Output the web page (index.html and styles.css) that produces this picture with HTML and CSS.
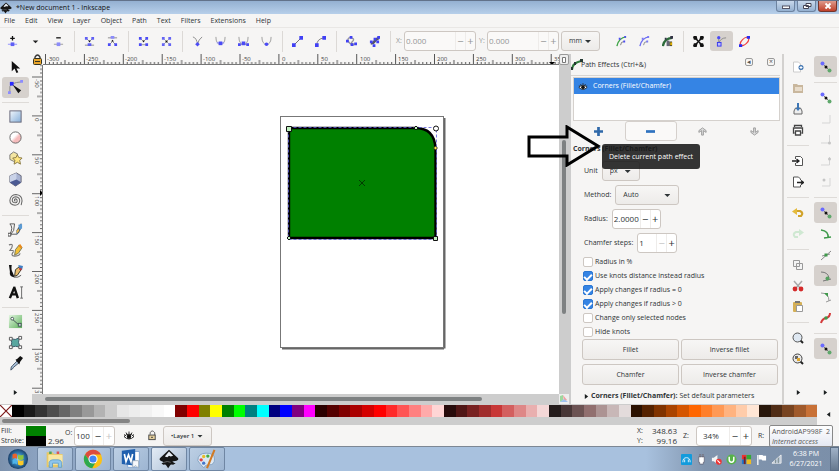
FILE: index.html
```html
<!DOCTYPE html>
<html lang="en">
<head>
<meta charset="utf-8">
<title>*New document 1 - Inkscape</title>
<link rel="stylesheet" href="styles.css">
</head>
<body>
<svg class="defs" aria-hidden="true">
  <defs>
    <linearGradient id="gBlue" x1="0" y1="0" x2="1" y2="1"><stop offset="0" stop-color="#f2f7fc"/><stop offset="1" stop-color="#86afd9"/></linearGradient>
    <linearGradient id="gPink" x1="0" y1="0" x2="1" y2="1"><stop offset=".4" stop-color="#fff"/><stop offset=".6" stop-color="#f6bcbc"/></linearGradient>
    <linearGradient id="gGreen" x1="0" y1="0" x2="1" y2="1"><stop offset="0" stop-color="#e2f5e0"/><stop offset="1" stop-color="#5fb25c"/></linearGradient>
    <radialGradient id="gOrb"><stop offset="0" stop-color="#9bd4f0"/><stop offset=".6" stop-color="#2f78ad"/><stop offset="1" stop-color="#1b3f68"/></radialGradient>
    <symbol id="ink" viewBox="0 0 24 24"><path d="M12 1 23 11q1 2-2 3l-5 1q2 2 4 2l-3 2q-3-1-4 1l-2 3-2-3q-1-2-4-1l-2-2 3-1-4-2q-2-1-1-3z" fill="#161616"/><path d="m12 3 5 5-3 1-2-1-2 2-3-1z" fill="#e8eef5"/><path d="M6 16q4-2 8 0" stroke="#777" fill="none"/></symbol>
    <symbol id="nodeSnap" viewBox="0 0 12 12"><path d="M2 2 10 10" stroke="#777"/><circle cx="2.500" cy="2.500" r="2" fill="#6a6aff"/><circle cx="6" cy="6" r="1.500" fill="#111"/><circle cx="9.500" cy="9.500" r="2" fill="#5fa86c"/></symbol>
    <symbol id="eye" viewBox="0 0 12 10"><path d="M1 6Q6 1 11 6 6 11 1 6z" fill="#fff" stroke="#222"/><circle cx="6" cy="6" r="2.200" fill="#111"/><path d="M1 4 2.500 5M3 2l1 2M6 1v2M9 2 8 4M11 4 9.500 5" stroke="#222" stroke-width=".9"/></symbol>
    <symbol id="tri" viewBox="0 0 6 8"><path d="M1 1v6l4-3z" fill="#1b1f20"/></symbol>
    <pattern id="ticksH" x="43.500" width="38.900" height="12" patternUnits="userSpaceOnUse"><path d="M4.390 8v4M8.280 8v4M12.170 8v4M16.060 8v4M19.950 6v6M23.840 8v4M27.730 8v4M31.620 8v4M35.510 8v4" stroke="#555"/><path d="M.5 0v12" stroke="#555"/></pattern>
    <pattern id="ticksV" y="11.500" width="11" height="38.900" patternUnits="userSpaceOnUse"><path d="M8 4.390h3M8 8.280h3M8 12.170h3M8 16.060h3M5 19.950h6M8 23.840h3M8 27.730h3M8 31.620h3M8 35.510h3" stroke="#666"/><path d="M0 .5h11" stroke="#666"/></pattern>
  </defs>
</svg>

<div class="app">
  <header class="titlebar">
    <svg class="i12"><use href="#ink"/></svg>
    <h1>*New document 1 - Inkscape</h1>
    <div class="winbtns">
      <button aria-label="Minimize"><svg viewBox="0 0 12 8"><rect x="2.500" y="4" width="7" height="2.500" fill="#fff" stroke="#556"/></svg></button>
      <button aria-label="Restore"><svg viewBox="0 0 12 8"><path d="M5 1.500h5v3H5zM2.500 3.500h5v3h-5z" fill="#fff" stroke="#445"/></svg></button>
      <button class="close" aria-label="Close"><svg viewBox="0 0 12 8"><path d="m3.500 1.500 5 5m0-5-5 5" stroke="#fff" stroke-width="1.800"/></svg></button>
    </div>
  </header>

  <nav class="menubar">
    <button>File</button><button>Edit</button><button>View</button><button>Layer</button><button>Object</button><button>Path</button><button>Text</button><button>Filters</button><button>Extensions</button><button>Help</button>
  </nav>

  <div class="toolbar">
    <button class="tb" aria-label="Insert node"><svg viewBox="0 0 12 12"><path d="M1 9h10" stroke="#8a8aff"/><rect x="4" y="7" width="4" height="4" fill="#5f5ff5"/><path d="M6 0v5M3.500 2.500h5" stroke="#111" stroke-width="1.400"/></svg></button>
    <button class="tb" aria-label="Insert options"><svg viewBox="0 0 12 12"><path d="M3 5h6L6 8z" fill="#222"/></svg></button>
    <button class="tb" aria-label="Delete node"><svg viewBox="0 0 12 12"><path d="M1 9h10" stroke="#999"/><rect x="4" y="7" width="4" height="4" fill="#8c8cfa"/><path d="M3.500 2h5" stroke="#111" stroke-width="1.400"/></svg></button>
    <i class="vsep"></i>
    <button class="tb" aria-label="Join nodes"><svg viewBox="0 0 12 12"><path d="M1 10h10M3 3l2 2m4-2L7 5" stroke="#888"/><path d="M1 1h3v3H1zM8 1h3v3H8zM4 8h4v3H4z" fill="#5f5ff5"/><path d="M4.500 5h3L6 7z" fill="#111"/></svg></button>
    <button class="tb" aria-label="Break path"><svg viewBox="0 0 12 12"><path d="M1 2h10M3 9l3-3 3 3" stroke="#888" fill="none"/><path d="M4 0h4v3H4z" fill="#8c8cfa"/><path d="M1 8h3v3H1zM8 8h3v3H8z" fill="#4b4bf5"/><path d="M4.500 6h3L6 4z" fill="#111"/></svg></button>
    <i class="vsep"></i>
    <button class="tb" aria-label="Join with segment"><svg viewBox="0 0 12 12"><path d="M3 9.500h6M2 2l3 3m5-3L7 5" stroke="#999"/><path d="M1 1h3v3H1zM8 1h3v3H8zM1 8h3v3H1zM8 8h3v3H8z" fill="#4b4bf5"/><path d="M4.500 5h3L6 7z" fill="#111"/></svg></button>
    <button class="tb" aria-label="Delete segment"><svg viewBox="0 0 12 12"><path d="m3 3 6 6m0-6L3 9" stroke="#aaa"/><path d="M1 1h3v3H1zM8 1h3v3H8zM1 8h3v3H1zM8 8h3v3H8z" fill="#6464f5"/><path d="M5 5h2v2H5z" fill="#111"/></svg></button>
    <i class="vsep"></i>
    <button class="tb" aria-label="Corner"><svg viewBox="0 0 12 12"><path d="M1 1q4 1 5 8 1-5 5-8" fill="none" stroke="#888"/><path d="m6 6.500 2.500 2.500L6 11.500 3.500 9z" fill="#4b4bf5"/></svg></button>
    <button class="tb" aria-label="Smooth"><svg viewBox="0 0 12 12"><path d="M1 1q0 8 5 8t5-8" fill="none" stroke="#999"/><path d="M2 7.500h8" stroke="#88f"/><rect x="4" y="6" width="4" height="4" fill="#4b4bf5"/></svg></button>
    <button class="tb" aria-label="Symmetric"><svg viewBox="0 0 12 12"><path d="M1 1q0 8 5 8t5-8M1 9h10" fill="none" stroke="#999"/><path d="M4 6h4v4H4zM0 8h3v3H0zM9 8h3v3H9z" fill="#4b4bf5"/></svg></button>
    <button class="tb" aria-label="Auto smooth"><svg viewBox="0 0 12 12"><path d="M1 1q0 8 5 8t5-8" fill="none" stroke="#999"/><circle cx="6" cy="9" r="2" fill="#4b4bf5"/></svg></button>
    <i class="vsep"></i>
    <button class="tb" aria-label="Make line"><svg viewBox="0 0 12 12"><path d="m2 10 8-8" stroke="#666"/><path d="M0 8h4v4H0zM8 0h4v4H8z" fill="#4040f5"/></svg></button>
    <button class="tb" aria-label="Make curve"><svg viewBox="0 0 12 12"><path d="M2 10q0-7 8-8" fill="none" stroke="#777"/><path d="M0 8h4v4H0zM8 0h4v4H8z" fill="#4040f5"/></svg></button>
    <i class="vsep"></i>
    <button class="tb" aria-label="Object to path"><svg viewBox="0 0 12 12"><path d="M2 5q0-4 4-3t1 4 4 3M2 5q2 4 7 5" fill="none" stroke="#999" stroke-width="1.500"/><path d="M4 0h3v3H4zM0 4h3v3H0zM5 8h3v3H5zM9 7h3v3H9z" fill="#4040f5"/></svg></button>
    <button class="tb" aria-label="Stroke to path"><svg viewBox="0 0 12 12"><path d="M2 8q3 0 4-2t5-4" fill="none" stroke="#556" stroke-width="3"/><path d="M1 5h3v3H1zM4 9h3v3H4zM5 2h3v3H5zM9 0h3v3H9zM8 5h3v3H8z" fill="#4040f5"/></svg></button>
    <i class="vsep"></i>
    <label class="dim axis" for="nx">X:</label>
    <div class="spin wide dim"><input id="nx" value="0.000"><button aria-label="Less">−</button><button aria-label="More">+</button></div>
    <label class="dim axis" for="ny">Y:</label>
    <div class="spin wide dim"><input id="ny" value="0.000"><button aria-label="Less">−</button><button aria-label="More">+</button></div>
    <div class="sel unit"><select aria-label="Units"><option>mm</option></select></div>
    <button class="tb after" aria-label="Edit clip"><svg viewBox="0 0 12 12"><path d="M1 11q2-9 10-10" fill="none" stroke="#3fa447" stroke-width="1.500"/><path d="M5 10q0-4 4-4" fill="none" stroke="#777"/><path d="M3 2h2v2H3zM9 0h2v2H9zM8 5h2v2H8z" fill="#4b4bf5"/></svg></button>
    <button class="tb" aria-label="Edit mask"><svg viewBox="0 0 12 12"><path d="M1 11q2-9 10-10" fill="none" stroke="#6d6df0" stroke-width="1.500"/><path d="M5 10q0-4 4-4" fill="none" stroke="#888"/><path d="M3 2h2v2H3zM9 0h2v2H9zM8 5h2v2H8z" fill="#7777f5"/></svg></button>
    <button class="tb" aria-label="Edit effect"><svg viewBox="0 0 12 12"><path d="M1 11q1-8 10-9" fill="none" stroke="#2c6b3a" stroke-width="2.400"/><path d="M5 5h3v6H5z" fill="#667"/><path d="M8 6h3v5H8z" fill="#443"/><path d="M9 7h2v3H9z" fill="#e5b300"/><path d="M3 2h2v2H3zM9 0h3v3H9z" fill="#334"/></svg></button>
    <i class="vsep"></i>
    <button class="tb" aria-label="Transform handles"><svg viewBox="0 0 12 12"><path d="m2 2 8 8m0-8-8 8" stroke="#111" stroke-width="1.500"/><path d="M1 0h3l1 4-4 0-1-3zM11 0H8L7 4h4l1-3zM1 12h3l1-4H1l-1 3zM11 12H8L7 8h4l1 3z" fill="#111"/></svg></button>
    <button class="tb on" aria-label="Bezier handles"><svg viewBox="0 0 12 12"><path d="M3 8V2M3 8q2-6 8-6" fill="none" stroke="#888"/><circle cx="3" cy="1.800" r="1.800" fill="#4b4bf5"/><rect x="1.500" y="7" width="4" height="4" fill="#bbf" stroke="#3333f0"/></svg></button>
    <button class="tb" aria-label="Path outline"><svg viewBox="0 0 12 12"><ellipse cx="6" cy="6" rx="5.500" ry="3" transform="rotate(-45 6 6)" fill="none" stroke="#f04040" stroke-width="1.300"/><path d="M0 9h3.500v3H0zM8.500 0H12v3H8.500z" fill="#2b2bf0"/></svg></button>
  </div>

  <main class="work">
    <aside class="toolbox">
      <button aria-label="Selector"><svg viewBox="0 0 16 16"><path d="M4 2v11l3-3 2 5 2-1-2-4h4z" fill="#111"/></svg></button>
      <button class="on" aria-label="Node"><svg viewBox="0 0 16 16"><path d="M2 13V7q1-4 12-5" fill="none" stroke="#888"/><path d="M0 12h3v3H0zM13 0h3v3h-3z" fill="#8c8cff"/><path d="M2 2h4v4H2z" fill="#2a2aff"/><path d="m5 5 9 6-3 3z" fill="#111"/></svg></button>
      <hr>
      <button aria-label="Rectangle"><svg viewBox="0 0 16 16"><rect x="2" y="2" width="12" height="12" fill="url(#gBlue)" stroke="#667"/></svg></button>
      <button aria-label="Ellipse"><svg viewBox="0 0 16 16"><circle cx="8" cy="8" r="6" fill="url(#gPink)" stroke="#666"/></svg></button>
      <button aria-label="Star"><svg viewBox="0 0 16 16"><path d="M2 4 6 1l4 2v5l-4 3-4-2z" fill="#f3e5a2" stroke="#777"/><path d="m10 4 1.500 3 3.500.5-2.500 2.500.8 4-3.300-2-3.500 2 .8-4L5 7.500 8.500 7z" fill="#ffe680" stroke="#887744"/></svg></button>
      <button aria-label="3D box"><svg viewBox="0 0 16 16"><path d="M2 4 9 1l5 3v7l-6 4-6-4z" fill="#a8b3d3" stroke="#667"/><path d="M2 4 9 1v7l-7 3z" fill="#c9d2e8"/><path d="m2 11 7-3 5 3-6 4z" fill="#4b5a93"/></svg></button>
      <button aria-label="Spiral"><svg viewBox="0 0 16 16"><path d="M8 8.500q-1.500 0-1-1.500 1-1.500 2.500 0 1 3-1.500 3.500-3.500 0-3.500-3Q5 4 8.500 4q4 .5 4 4.500-.8 4.500-5 4.500Q2 12.500 2 8q.5-6 6.500-6.500Q15 2 15 8.500L14 13" fill="none" stroke="#666" stroke-width="1.100"/></svg></button>
      <hr>
      <button aria-label="Pen"><svg viewBox="0 0 16 16"><path d="M2 2h5l-1 7-3 4M2 2q4 4 0 11h7" fill="none" stroke="#555"/><path d="M14 1 9 9v5l3-3 3-6z" fill="#465b72"/><path d="m11 3 4-1v5l-3 1z" fill="#5b9bd5"/><path d="M0 12h3v3H0z" fill="#fff" stroke="#444"/><path d="m9 10 2-3 1 2-2 3z" fill="#f0bb4a"/></svg></button>
      <button aria-label="Pencil"><svg viewBox="0 0 16 16"><path d="M1 2q5-2 3 3L2 8h4M6 9q-4 5 1 5t6-3" fill="none" stroke="#777" stroke-width="1.200"/><path d="m7 13 1-6 4-5 3 3-4 6z" fill="#f2c037" stroke="#775"/><path d="m11 3 2-2 2 3-1 2z" fill="#e98a1c"/></svg></button>
      <button aria-label="Calligraphy"><svg viewBox="0 0 16 16"><path d="M1 1h3q-1 5 1 8l2 5q-6 0-5-6z" fill="#111"/><path d="M6 14q5 1 8-2" stroke="#555" fill="none"/><path d="m7 13 1-7 4-3 2 3-4 6z" fill="#e9bd6d" stroke="#332"/><path d="m11 1 5 1-1 4-3-1z" fill="#3f7fc4"/><path d="m12 4 3 1-1 2-2-1z" fill="#c33"/></svg></button>
      <button aria-label="Text"><svg viewBox="0 0 16 16"><path d="M7 2 2 14M6.500 2l4 12M4 10h5" stroke="#111" stroke-width="2.600" fill="none"/><path d="M13 2h3m-1.500 0v12M13 14h3" stroke="#666" fill="none"/></svg></button>
      <hr>
      <button aria-label="Gradient"><svg viewBox="0 0 16 16"><rect x="1" y="1" width="14" height="14" fill="url(#gGreen)"/><path d="m4 5 8 7" stroke="#455"/><circle cx="4.500" cy="5" r="1.500" fill="#fff" stroke="#455"/><rect x="11" y="10" width="3" height="3" fill="#cdd" stroke="#455"/></svg></button>
      <button aria-label="Mesh"><svg viewBox="0 0 16 16"><path d="M3 4q5 2 9-1-2 5 1 10-5-2-10 0 2-5 0-9z" fill="#58a79f" stroke="#356"/><path d="M1.500 2.500h3v3h-3zM11.500 1.500h3v3h-3zM1.500 11.500h3v3h-3zM11.500 11.500h3v3h-3z" fill="#fff" stroke="#555"/></svg></button>
      <button aria-label="Dropper"><svg viewBox="0 0 16 16"><path d="M3 15q0-4 2-5l5-5 2 2-6 5q-1 2-3 3z" fill="#a9bfd8" stroke="#456"/><path d="m8 4 2-1 3-3 3 2-3 4-1 3z" fill="#111"/></svg></button>
      <button class="more" aria-label="More tools"><svg class="tri"><use href="#tri"/></svg></button>
    </aside>

    <section class="view">
      <div class="corner"><svg viewBox="0 0 11 11"><path d="M3 5V3q2.500-4 5 0v2" fill="none" stroke="#333" stroke-width="1.400"/><rect x="1.500" y="4.500" width="8" height="6" rx="1" fill="#e9a52b" stroke="#332"/><path d="M3 7.500h5" stroke="#332"/></svg></div>
      <svg class="rulerh">
        <g transform="translate(-41.500 0)"><rect x="43" width="2000" height="12" fill="url(#ticksH)"/></g>
        <g class="rtext"><text x="4" y="7">-300</text><text x="43" y="7">-250</text><text x="82" y="7">-200</text><text x="121" y="7">-150</text><text x="160" y="7">-100</text><text x="199" y="7">-50</text><text x="239" y="7">0</text><text x="278" y="7">50</text><text x="317" y="7">100</text><text x="355" y="7">150</text><text x="394" y="7">200</text><text x="433" y="7">250</text><text x="472" y="7">300</text><text x="511" y="7">350</text></g>
        <path d="M506 8h6l-3 3z"/>
      </svg>
      <button class="zoomfit" aria-label="Fit drawing"><svg viewBox="0 0 8 8"><path d="M2.500 1.500h3v5h-3z" fill="#fff" stroke="#777"/></svg></button>
      <svg class="rulerv">
        <rect width="11" height="2000" fill="url(#ticksV)"/>
        <g class="rtext"><text transform="translate(3 14) rotate(90)">-50</text><text transform="translate(3 53) rotate(90)">0</text><text transform="translate(3 92) rotate(90)">50</text><text transform="translate(3 131) rotate(90)">100</text><text transform="translate(3 170) rotate(90)">150</text><text transform="translate(3 209) rotate(90)">200</text><text transform="translate(3 248) rotate(90)">250</text><text transform="translate(3 287) rotate(90)">300</text><text transform="translate(3 325) rotate(90)">350</text></g>
        <path d="M8 125v6l3-3z"/>
      </svg>
      <svg class="canvas">
        <path d="M401.500 53v230.500M239 283.500h162" stroke="#666" stroke-width="2" fill="none"/>
        <rect x="237.500" y="51.500" width="163" height="231" fill="#fff" stroke="#777"/>
        <path d="M246 63h126q20 0 20.500 21v89H246z" fill="#008000" stroke="#000" stroke-width="2.400"/>
        <path d="M245.500 62.500h148v112h-148z" fill="none" stroke="#5a5ad8" stroke-dasharray="3 2" stroke-width=".8"/>
        <path d="m316 115 6 6m0-6-6 6" stroke="#022b02" stroke-width=".8"/>
        <g fill="#bff0bf" stroke="#111"><path d="M243.500 61.500h5v5h-5z"/><path d="m373 61 2 2-2 2-2-2zM246 171l2 2-2 2-2-2z"/><path d="M390.500 171.500h4v4h-4z"/></g>
        <circle cx="393" cy="63.500" r="2.500" fill="#fff" stroke="#111"/>
        <path d="m392.500 81 2 2-2 2-2-2z" fill="#ffe94a" stroke="#222" stroke-width=".8"/>
      </svg>
      <div class="vscroll"><i></i></div>
      <div class="hscroll"><i></i></div>
      <div class="cms"><svg viewBox="0 0 10 9"><path d="M1 8V2l3-1v5z" fill="#9fd89f"/><path d="m4 1 4 5-3 2z" fill="#f0a0a0"/><path d="m1 8 4-3 4 3z" fill="#9fc4f0"/></svg></div>
      <svg class="pointer" viewBox="0 0 74 42"><path d="M2 12h38V2l31 19-31 19v-9H2z" fill="none" stroke="#000" stroke-width="3"/></svg>
    </section>

    <section class="panel">
      <header><svg class="i12" viewBox="0 0 12 12"><path d="M1 11q0-7 9-9" fill="none" stroke="#2f7d3d" stroke-width="2"/><path d="M0 8h2v3H0zM3 3h2v3H3zM9 0h3v3H9z" fill="#253a33"/></svg><h2>Path Effects (Ctrl+&amp;)</h2>
        <button aria-label="Iconify">◂</button><button aria-label="Close dialog">×</button></header>
      <div class="list"><div class="row"><svg class="eye"><use href="#eye"/></svg>Corners (Fillet/Chamfer)</div></div>
      <div class="ops">
        <button aria-label="Add effect"><svg viewBox="0 0 8 8"><path d="M4 0v8M0 4h8" stroke="#2f68a8" stroke-width="2.400"/></svg></button>
        <button class="boxed" aria-label="Delete effect"><svg viewBox="0 0 8 8"><path d="M0 4h8" stroke="#2f73c0" stroke-width="2.400"/></svg></button>
        <button aria-label="Move up"><svg viewBox="0 0 10 10"><path d="M1 6V4l4-3 4 3v2L6 4v5H4V4z" fill="#ddd" stroke="#999"/></svg></button>
        <button aria-label="Move down"><svg viewBox="0 0 10 10"><path d="M1 4v2l4 3 4-3V4L6 6V1H4v5z" fill="#ddd" stroke="#999"/></svg></button>
        <div class="tip" role="tooltip">Delete current path effect</div>
      </div>
      <h3>Corners (Fillet/Chamfer)</h3>
      <form class="params">
        <div class="field"><label for="u">Unit</label><div class="sel px"><select id="u"><option>px</option></select></div></div>
        <div class="field"><label for="m">Method:</label><div class="sel auto"><select id="m"><option>Auto</option></select></div></div>
        <div class="field"><label for="r">Radius:</label><div class="spin"><input id="r" class="w26" value="2.0000"><button type="button" aria-label="Less">−</button><button type="button" aria-label="More">+</button></div></div>
        <div class="field"><label for="c">Chamfer steps:</label><div class="spin"><input id="c" class="w18" value="1"><button type="button" class="off" aria-label="Less">−</button><button type="button" aria-label="More">+</button></div></div>
        <div class="checks">
          <label><input type="checkbox">Radius in %</label>
          <label><input type="checkbox" checked>Use knots distance instead radius</label>
          <label><input type="checkbox" checked>Apply changes if radius = 0</label>
          <label><input type="checkbox" checked>Apply changes if radius &gt; 0</label>
          <label><input type="checkbox">Change only selected nodes</label>
          <label><input type="checkbox">Hide knots</label>
        </div>
        <div class="actions"><button type="button">Fillet</button><button type="button">Inverse fillet</button><button type="button">Chamfer</button><button type="button">Inverse chamfer</button></div>
      </form>
      <button class="expander"><svg class="tri"><use href="#tri"/></svg><b>Corners (Fillet/Chamfer):</b> Set default parameters</button>
    </section>

    <aside class="cmds">
      <button aria-label="New"><svg viewBox="0 0 12 12"><path d="M1.500 1h5l2 2v8h-7z" fill="#fff" stroke="#ccc"/><circle cx="9" cy="6.500" r="2.500" fill="#3c72b0"/><path d="M9 5v3M7.500 6.500h3" stroke="#fff"/></svg></button>
      <button aria-label="Open"><svg viewBox="0 0 12 12"><path d="M1 2h4l1 1h5v8H1z" fill="#c9b79d"/><path d="M3 5h7v4H3z" fill="#e8dccb"/></svg></button>
      <button aria-label="Save"><svg viewBox="0 0 12 12"><path d="M2 8 3.500 5h5L10 8v3H2z" fill="#eee" stroke="#666"/><path d="M5 0h2v5h1.500L6 8 3.500 5H5z" fill="#3d76b5"/></svg></button>
      <button aria-label="Print"><svg viewBox="0 0 12 12"><path d="M2.500 3V1.500h7V3M2.500 9h-1V4h9v5h-1M3.500 7h5v4h-5z" fill="#fff" stroke="#444" stroke-width="1.300"/></svg></button>
      <hr>
      <button aria-label="Import"><svg viewBox="0 0 12 12"><path d="M3.500 4V1.500h5l2 2v7h-7V8" fill="#fff" stroke="#555"/><path d="M0 6h6M4.500 4 7 6 4.500 8" stroke="#222" fill="none" stroke-width="1.300"/></svg></button>
      <button aria-label="Export"><svg viewBox="0 0 12 12"><path d="M8.500 4V3l-2-2h-5v10h7V9" fill="#fff" stroke="#555"/><path d="M5 6.500h6M9 4.500l2.500 2L9 8.500" stroke="#222" fill="none" stroke-width="1.300"/></svg></button>
      <hr>
      <button aria-label="Undo"><svg viewBox="0 0 12 12"><path d="M2 4h6q4 2 1 5H6" fill="none" stroke="#d1a32a" stroke-width="2.200"/><path d="M0 4.500 5 1v7z" fill="#e5bb3d"/></svg></button>
      <button aria-label="Redo"><svg viewBox="0 0 12 12"><path d="M10 4H4q-4 2-1 5h3" fill="none" stroke="#cfe8d2" stroke-width="2"/><path d="M12 4.500 7 1v7z" fill="#cfe8d2"/></svg></button>
      <hr>
      <button aria-label="Copy"><svg viewBox="0 0 12 12"><path d="M1.500 1.500h6v6h-6zM4.500 4.500h6v6h-6z" fill="#f4f4f4" stroke="#999"/></svg></button>
      <button aria-label="Cut"><svg viewBox="0 0 12 12"><path d="m2 1 6 7m2-7L4 8" stroke="#aaa" stroke-width="1.500"/><circle cx="3" cy="9" r="2.400" fill="#d42a2a"/><circle cx="9" cy="9" r="2.400" fill="#d42a2a"/></svg></button>
      <button aria-label="Paste"><svg viewBox="0 0 12 12"><rect x="1" y="1" width="9" height="10" rx="1" fill="#d5b057"/><path d="M3 0h5v2H3z" fill="#777"/><path d="M4.500 4.500h6v6h-6z" fill="#fff" stroke="#999"/></svg></button>
      <hr>
      <button aria-label="Zoom drawing"><svg viewBox="0 0 12 12"><path d="m8 8 3 3" stroke="#222" stroke-width="2"/><circle cx="5.500" cy="5.500" r="4.500" fill="#dfe8f2" stroke="#555"/></svg></button>
      <button aria-label="Zoom page"><svg viewBox="0 0 12 12"><path d="m8 8 3 3" stroke="#222" stroke-width="2"/><circle cx="5.500" cy="5.500" r="4.500" fill="#e8e8e8" stroke="#444"/><path d="M3 3h3v3H3z" fill="#666"/><path d="M5 5h3v3H5z" fill="#e0a82e"/></svg></button>
      <button class="more" aria-label="More commands"><svg class="tri"><use href="#tri"/></svg></button>
    </aside>

    <aside class="snaps">
      <button class="on" aria-label="Snap"><svg><use href="#nodeSnap"/></svg></button>
      <hr>
      <button aria-label="Snap bounding boxes"><svg><use href="#nodeSnap"/></svg></button>
      <button aria-label="Snap edges"><svg viewBox="0 0 12 12"><path d="M10 2v8H2" fill="none" stroke="#d5d5d5"/></svg></button>
      <button aria-label="Snap corners"><svg viewBox="0 0 12 12"><path d="M9.500 1v8H1" fill="none" stroke="#d5d5d5"/><circle cx="9.500" cy="9" r="1.500" fill="#c5c5c5"/></svg></button>
      <button aria-label="Snap edge midpoints"><svg viewBox="0 0 12 12"><path d="M9.500 2v8H1" fill="none" stroke="#d5d5d5"/><circle cx="9.500" cy="4" r="1.500" fill="#c5c5c5"/></svg></button>
      <button aria-label="Snap box centers"><svg viewBox="0 0 12 12"><path d="M10 2v8H2" fill="none" stroke="#d5d5d5"/><circle cx="4" cy="4" r="1.500" fill="#c5c5c5"/></svg></button>
      <hr>
      <button class="on" aria-label="Snap nodes"><svg><use href="#nodeSnap"/></svg></button>
      <button aria-label="Snap paths"><svg viewBox="0 0 12 12"><path d="M1 2q8 1 7 8M4 10l7-1" fill="none" stroke="#3f9a4b" stroke-width="1.500"/></svg></button>
      <button aria-label="Snap intersections"><svg viewBox="0 0 12 12"><path d="m1 11 10-9M2 7l8-2" stroke="#888"/><rect x="4.500" y="4.500" width="3" height="3" fill="#3f9a4b"/></svg></button>
      <button class="on" aria-label="Snap cusp nodes"><svg viewBox="0 0 12 12"><path d="M1 2q7 0 8 6M3 11l8-2" fill="none" stroke="#777"/><circle cx="7.500" cy="8.500" r="2" fill="#56a060"/></svg></button>
      <button aria-label="Snap smooth nodes"><svg viewBox="0 0 12 12"><path d="M1 2q8 0 8 8M6 11l5-2" fill="none" stroke="#999"/><path d="M4 2h4v4z" fill="#3f9a4b"/></svg></button>
      <button aria-label="Snap midpoints"><svg viewBox="0 0 12 12"><path d="M1 11q1-4 5-5t4-5" fill="none" stroke="#d43a3a" stroke-width="2"/><circle cx="6" cy="6" r="1.800" fill="#3f9a4b"/></svg></button>
      <hr>
      <button class="on" aria-label="Snap others"><svg><use href="#nodeSnap"/></svg></button>
      <button class="more" aria-label="More snapping"><svg class="tri"><use href="#tri"/></svg></button>
    </aside>
  </main>

  <div class="palette">
    <button class="none" aria-label="No color"><svg viewBox="0 0 12 12" preserveAspectRatio="none"><path d="m0 0 12 12m0-12L0 12" stroke="#7d1a1a" stroke-width="1.200"/></svg></button>
    <div class="swatches" id="swatches"></div>
    <div class="palmenu"><svg class="tri flip"><use href="#tri"/></svg></div>
    <div class="palscroll"><i></i></div>
  </div>

  <footer class="status">
    <div class="style"><span>Fill:</span><i class="fill"></i><span></span><span>Stroke:</span><i class="stroke"></i><span class="num">2.96</span></div>
    <label class="olab" for="o">O:</label>
    <div class="spin tall"><input id="o" class="w17" value="100"><button aria-label="Less">−</button><button class="off" aria-label="More">+</button></div>
    <button class="tb" aria-label="Layer visible"><svg><use href="#eye"/></svg></button>
    <button class="tb" aria-label="Lock layer"><svg viewBox="0 0 12 12"><path d="M4 5V3q2-4 5 0v3" fill="none" stroke="#555"/><rect x="2.500" y="5.500" width="7" height="5" fill="#e5cf9c" stroke="#444"/><path d="M5 8h2" stroke="#333"/></svg></button>
    <div class="sel layer"><select aria-label="Layer"><option>•Layer 1</option></select></div>
    <div class="coords"><span>X:</span><span>348.63</span><span>Y:</span><span>99.16</span></div>
    <label class="zlab" for="z">Z:</label>
    <div class="spin tall"><input id="z" class="w32" value="34%"><button aria-label="Less">−</button><button aria-label="More">+</button></div>
    <span class="rlab">R:</span>
    <div class="nettip">AndroidAP998F&nbsp; 2<em>Internet access</em></div>
  </footer>

  <div class="taskbar">
    <button class="orb" aria-label="Start"><svg viewBox="0 0 24 24"><circle cx="12" cy="12" r="11" fill="url(#gOrb)"/><path d="M6 7q3-2 5 0v5q-3-2-5 0z" fill="#e8622c"/><path d="M12 7q3 2 6 0v5q-3 2-6 0z" fill="#8dc63f"/><path d="M6 13q3-2 5 0v5q-3-2-5 0z" fill="#4fb3e8"/><path d="M12 13q3 2 6 0v5q-3 2-6 0z" fill="#fbc927"/></svg></button>
    <button class="task" aria-label="Explorer"><svg viewBox="0 0 24 24"><path d="M2 4h7l2 2h10v16H2z" fill="#e8c865"/><path d="M4 7h17v12H4z" fill="#f8e7a4"/><path d="M5 3h3v3H5z" fill="#4aa35a"/><path d="M14 3h3v3h-3z" fill="#d55"/><path d="M5 22v-6q1-3 4-3h7q3 0 4 3v6h-4v-5H9v5z" fill="#8ec5ec" stroke="#5b9cc9"/></svg></button>
    <button class="task" aria-label="Chrome"><svg viewBox="0 0 24 24"><circle cx="12" cy="12" r="11" fill="#fbc116"/><path d="M2.500 6.500A11 11 0 0 1 21.500 6.500H12L8 14.500z" fill="#dd4b3e"/><path d="M2.500 6.500A11 11 0 0 0 11 23l5-8.500H8z" fill="#2da94f"/><circle cx="12" cy="12" r="5.500" fill="#fff"/><circle cx="12" cy="12" r="4.300" fill="#4285f4"/></svg></button>
    <button class="task" aria-label="Word"><svg viewBox="0 0 24 24"><path d="M8 3h14v19H8z" fill="#fff" stroke="#7ba0cf"/><path d="M1 2 17 0v20L1 18z" fill="#1f5fae"/><path d="m4 6 2 9 3-8 3 8 2-9" fill="none" stroke="#fff" stroke-width="2"/><path d="M14 14h7v9l-3-3-4 2z" fill="#f7f9fc" stroke="#9ab"/></svg></button>
    <button class="task on" aria-label="Inkscape"><svg><use href="#ink"/></svg></button>
    <button class="task" aria-label="Paint"><svg viewBox="0 0 24 24"><path d="M1 14q0-9 10-9t10 7-6 7-6 3T1 14z" fill="#dce8f4" stroke="#7e9dbd"/><circle cx="5" cy="13" r="2" fill="#d44"/><circle cx="8" cy="9" r="2" fill="#e9bd2b"/><circle cx="13" cy="8.500" r="2" fill="#4a4"/><circle cx="8" cy="17" r="2" fill="#47c"/><path d="M21 1 12 23" stroke="#d07a26" stroke-width="2.500"/></svg></button>
    <div class="tray">
      <svg viewBox="0 0 12 12"><rect x="0" y="0" width="12" height="12" rx="1" fill="#129bdc"/><path d="M2 9q0-5 4-5t4 5M4 6v3m4-3v3" stroke="#e6f6ff" fill="none"/></svg>
      <svg viewBox="0 0 12 12"><path d="M3 3h6v6H8v2H4V9H3zM4 0h1v3H4zM7 0h1v3H7z" fill="#fff" stroke="#556" stroke-width=".7"/></svg>
      <svg viewBox="0 0 12 12"><path d="M1 4h2l4-3v10L3 8H1z" fill="#f4f4f4"/><circle cx="8.500" cy="8.500" r="3.200" fill="#e33"/><path d="m7 7 3 3" stroke="#fff" stroke-width="1.300"/></svg>
      <svg viewBox="0 0 12 12"><circle cx="6" cy="6" r="5.500" fill="#57b34a"/><path d="M3.500 3v3q0 3 2.500 3t2.500-3V3" stroke="#fff" fill="none" stroke-width="1.600"/></svg>
      <svg viewBox="0 0 12 12"><path d="M1 1h5v5H1z" fill="#e33"/><path d="M6 1h5v5H6z" fill="#3a3"/><path d="M1 6h5v5H1z" fill="#27c"/><path d="M6 6h5v5H6z" fill="#eb2"/><path d="M3 3h2v8H3z" fill="#722"/></svg>
      <svg viewBox="0 0 12 12"><path d="M2 1v11" stroke="#fff" stroke-width="1.400"/><path d="M3 1h4l1 1h3v5H7L6 6H3z" fill="#fff"/></svg>
      <svg viewBox="0 0 12 12"><path d="M1 10 11 1v9z" fill="#b9c6d6" stroke="#eee"/><path d="M5 10V6M8 10V4" stroke="#788"/></svg>
    </div>
    <time class="clock">6:38 PM<br>6/27/2021</time>
    <button class="desk" aria-label="Show desktop"></button>
  </div>
</div>
<script src="script.js"></script>
</body>
</html>
```

FILE: styles.css
```css
* { box-sizing: border-box; }
html, body { height: 100%; margin: 0; }
body { font: 7px/10px "Open Sans", "Noto Sans", sans-serif; color: #2e3436; background: #f6f5f4; overflow: hidden; }
button, input, select { font: inherit; color: inherit; margin: 0; padding: 0; border: 0; background: none; }
button { display: flex; align-items: center; justify-content: center; white-space: nowrap; }
h1, h2, h3 { margin: 0; font: inherit; }
svg { display: block; }
.defs { position: absolute; width: 0; height: 0; }
.app { display: flex; flex-direction: column; height: 100vh; }
.i12 { width: 12px; height: 12px; flex: none; }

.titlebar { display: flex; align-items: center; height: 14px; padding: 0 2px 0 0; border-top: 1px solid #62728a; background: linear-gradient(#94b0d1, #b7cfea); }
.titlebar h1 { flex: 1; margin-left: 4px; color: #111; }
.winbtns { display: flex; gap: 2px; align-self: flex-start; }
.winbtns button { width: 19px; height: 11px; border: 1px solid #6d83a0; border-top: 0; border-radius: 0 0 3px 3px; background: linear-gradient(#c9d9ec, #94b0d0); }
.winbtns svg { width: 12px; height: 8px; }
.winbtns .close { background: linear-gradient(#de9a8c, #c0402a); border-color: #74352c; }

.menubar { display: flex; gap: 10px; height: 14px; padding: 0 4px; align-items: center; border-bottom: 1px solid #e9e7e5; }

.toolbar { display: flex; align-items: center; height: 26px; padding-left: 1px; white-space: nowrap; }
.tb { width: 23px; height: 20px; flex: none; border-radius: 3px; }
.tb svg { width: 11px; height: 11px; }
.on { background: #d6d1cd; }
.vsep { width: 8px; height: 21px; flex: none; background: linear-gradient(#dcd9d6, #dcd9d6) center / 1px 100% no-repeat; }
.axis { width: 8px; margin-left: 2px; }
.dim { color: #959797; }
.after { margin-left: 10px; }

.spin { display: flex; height: 20px; flex: none; border: 1px solid #cdc7c2; border-radius: 3px; background: #fff; overflow: hidden; }
.spin input { min-width: 0; padding-left: 1px; outline: 0; font-size: 8px; }
.spin button { width: 10px; flex: none; font-size: 11px; border-left: 1px solid #eeecea; }
.spin.wide { width: 72px; margin-right: 1px; background: #faf9f8; }
.spin.wide input { flex: 1; }
.spin .off { color: #c5c5c5; }
.w26 { width: 27px; }
.w18 { width: 18px; }
.w17 { width: 17px; }
.w32 { width: 32px; }
.spin .w32 { padding-left: 6px; }
.tall button { width: 11px; }

.sel { position: relative; display: flex; height: 20px; flex: none; border: 1px solid #cdc7c2; border-radius: 3px; background: linear-gradient(#f7f6f5, #edebe9); }
.sel select { appearance: none; width: 100%; padding-left: 7px; outline: 0; }
.sel::after { content: ""; position: absolute; right: 8px; top: 8px; width: 6px; height: 3px; background: #2e3436; clip-path: polygon(0 0, 100% 0, 50% 100%); pointer-events: none; }
.unit { width: 39px; margin-left: 1px; }
.px { width: 38px; }
.auto { width: 64px; }
.layer { width: 49px; font-size: 6px; font-weight: 600; }

.work { display: flex; flex: 1; min-height: 0; }
.toolbox, .cmds, .snaps { display: flex; flex-direction: column; flex: none; padding-top: 2px; }
.toolbox { width: 32px; padding-right: 3px; padding-left: 2px; }
.toolbox button, .cmds button, .snaps button { height: 21px; flex: none; border-radius: 3px; }
.toolbox svg { width: 15px; height: 15px; }
.toolbox hr, .cmds hr, .snaps hr { width: 100%; margin: 4px 0 3px; border: 0; height: 1px; flex: none; background: #dedbd8; }
.cmds hr, .snaps hr { margin: 5px 0 4px; }
.cmds { width: 27px; padding-left: 3px; padding-right: 2px; }
.snaps { width: 28px; padding-left: 3px; padding-right: 2px; }
.cmds svg, .snaps svg { width: 12px; height: 12px; }
.work .more { margin-top: auto; margin-bottom: 1px; }
.tri, .work .more svg { width: 5px; height: 7px; }

.view { position: relative; display: grid; flex: 1; min-width: 0; grid-template-columns: 11px 1fr 12px; grid-template-rows: 11px 1fr 10px; background: #cdcdcd; }
.corner, .rulerv { background: #f6f5f4; }
.corner svg { width: 11px; height: 11px; }
.rulerh, .rulerv, .canvas { width: 100%; height: 100%; overflow: hidden; min-width: 0; min-height: 0; }
.rulerh { background: #f6f5f4; border-bottom: 1px solid #777; }
.rulerv { border-right: 1px solid #777; }
.rtext { font-size: 6px; fill: #444; }
.canvas { background: #fff; }
.zoomfit { border: 1px solid #999; border-radius: 2px; background: #eee; margin-right: 2px; }
.zoomfit svg { width: 8px; height: 8px; }
.vscroll { padding: 75px 0 0 3px; }
.vscroll i { display: block; width: 4px; height: 174px; border-radius: 2px; background: #7e8182; }
.hscroll { grid-column: 1 / 3; margin-left: 11px; padding: 3px 0 0 2px; }
.hscroll i { display: block; width: 85%; height: 4px; border-radius: 2px; background: #7e8182; }
.cms { background: #eee; margin-right: 2px; }
.cms svg { width: 10px; height: 9px; }
.pointer { position: absolute; right: -30px; top: 71px; width: 74px; height: 42px; z-index: 2; pointer-events: none; }

.panel { width: 213px; flex: none; padding: 0 2px; border-right: 2px solid #d3d1cf; overflow: hidden; }
.panel header { display: flex; align-items: center; height: 22px; border-bottom: 1px solid #d8d5d2; margin: 0 0 1px -2px; }
.panel h2 { flex: 1; margin-left: -2px; }
.panel header button { width: 8px; height: 8px; margin-right: 14px; margin-top: -6px; border: 1px solid #999; border-radius: 2px; font-size: 7px; color: #555; }
.panel header button:last-child { margin-right: 5px; }
.list { height: 44px; border: 1px solid #d5d1cd; background: #fff; }
.row { display: flex; align-items: center; gap: 5px; height: 16px; padding-left: 4px; background: #3584e4; color: #fff; }
.eye { width: 10px; height: 9px; }
.ops { position: relative; display: grid; grid-template-columns: repeat(4, 1fr); height: 20px; }
.ops button svg { width: 9px; height: 9px; }
.ops .boxed { border: 1px solid #d5d0cc; border-radius: 3px; background: #faf9f8; }
.tip { position: absolute; left: 29px; top: 23px; z-index: 1; padding: 8px 7px; width: 98px; height: 25px; border-radius: 3px; background: rgba(25, 25, 25, .88); color: #fff; line-height: 9px; white-space: nowrap; }
.panel h3 { margin: 3px 0 8px; font-weight: 700; line-height: 9px; }
.params { padding: 0 2px 0 9px; }
.field { display: flex; align-items: center; gap: 4px; height: 20px; margin: 0 0 4px 2px; }
.field:nth-child(4) { margin-bottom: 2px; }
.checks { display: flex; flex-direction: column; }
.checks label { display: flex; align-items: center; gap: 2px; height: 14px; padding-left: 1px; }
.checks input { appearance: none; display: grid; place-items: center; width: 10px; height: 10px; border: 1px solid #cdc7c2; border-radius: 2px; background: #fff; }
.checks input:checked { border-color: #2a76d2; background: #3584e4; }
.checks input:checked::after { content: ""; width: 6px; height: 3px; border: solid #fff; border-width: 0 0 2px 2px; transform: rotate(-45deg); }
.actions { display: grid; grid-template-columns: 1fr 1fr; gap: 4px 2px; }
.actions button { height: 21px; border: 1px solid #cdc7c2; border-radius: 3px; background: linear-gradient(#f7f6f5, #edebe9); }
.expander { gap: 2px; margin: 6px 0 0 11px; }

.palette { display: grid; grid-template-columns: 12px 1fr 22px; grid-template-rows: 14px 7px; height: 21px; background: #cdcdcd; }
.palette .none { margin: 1px 0; background: #fff; }
.none svg { width: 100%; height: 12px; }
.swatches { display: flex; padding: 1px 0; min-width: 0; }
.swatches i { flex: 1; }
.palmenu { display: grid; place-items: center; grid-row: 1 / 3; grid-column: 3; background: #f6f5f4; }
.flip { transform: scaleX(-1); }
.palscroll { grid-column: 1 / 3; grid-row: 2; padding: 1px 2px; }
.palscroll i { display: block; width: 128px; height: 4px; border-radius: 2px; background: #848484; }

.status { position: relative; display: flex; align-items: center; height: 21px; white-space: nowrap; }
.style { display: grid; grid-template-columns: 25px 20px 19px; grid-auto-rows: 10px; padding-left: 1px; }
.style i { height: 10px; }
.fill { background: #008000; }
.stroke { background: #000; }
.num { padding-left: 2px; font-size: 8px; }
.olab { margin-right: 1px; width: 8px; align-self: flex-start; margin-top: 3px; }
.status .tb svg { width: 12px; height: 11px; }
.status .spin.tall + .tb { margin-left: 2px; }
.coords { display: grid; grid-template-columns: 10px 30px; margin-left: auto; margin-right: 6px; }
.coords span:nth-child(even) { text-align: right; font-size: 8px; }
.zlab { width: 13px; }
.rlab { width: 87px; padding-left: 6px; }
.nettip { position: absolute; right: 6px; top: 0; height: 22px; padding: 1px 2px; border: 1px solid #888; border-radius: 2px; background: linear-gradient(#fff, #e4e8f2); color: #555; z-index: 2; }
.nettip em { display: block; }

.taskbar { display: flex; align-items: center; height: 25px; border-top: 1px solid #7d8794; background: linear-gradient(90deg, #7d92ad, #8aa1bf 4%, #a8c1de 27%, #a8c1de 77%, #8195ae 84%, #7b8fa9); }
.orb { width: 36px; }
.orb svg { width: 22px; height: 22px; }
.task { width: 36px; height: 24px; margin: 0 1px; border: 1px solid #6f86a3; border-radius: 2px; background: linear-gradient(135deg, #bccfe4, #9db5d2); }
.task svg { width: 20px; height: 20px; }
.task.on { background: linear-gradient(135deg, #e2ebf5, #a9bcd3); }
.tray { display: flex; gap: 4px; margin-left: auto; }
.tray svg { width: 11px; height: 11px; }
.clock { width: 48px; color: #fff; text-align: center; }
.desk { width: 9px; height: 24px; border: 1px solid #5d7088; background: linear-gradient(#9fb1c7, #66798f); }
```

FILE: script.js
```js
// Default palette, one swatch per colour.
const colors = (
  "000000 1a1a1a 333333 4d4d4d 666666 808080 999999 b3b3b3 cccccc e6e6e6 ececec f2f2f2 f9f9f9 ffffff " +
  "800000 ff0000 808000 ffff00 008000 00ff00 008080 00ffff 000080 0000ff 800080 ff00ff " +
  "2b0000 550000 800000 aa0000 d40000 ff0000 ff2a2a ff5555 ff8080 ffaaaa ffd5d5 " +
  "280b0b 501616 782121 a02c2c c83737 d35f5f de8787 e9afaf f4d7d7 " +
  "241c1c 483737 6c5353 916f6f ac9393 c8b7b7 e3dbdb " +
  "2b1100 552200 803300 aa4400 d45500 ff6600 ff7f2a ff9955 ffb380 ffccaa ffe6d5 " +
  "28170b 502d16 784421 a05a2c c87137"
).split(" ");
const box = document.getElementById("swatches");
for (const c of colors) {
  const s = document.createElement("i");
  s.style.background = "#" + c;
  box.append(s);
}
```
